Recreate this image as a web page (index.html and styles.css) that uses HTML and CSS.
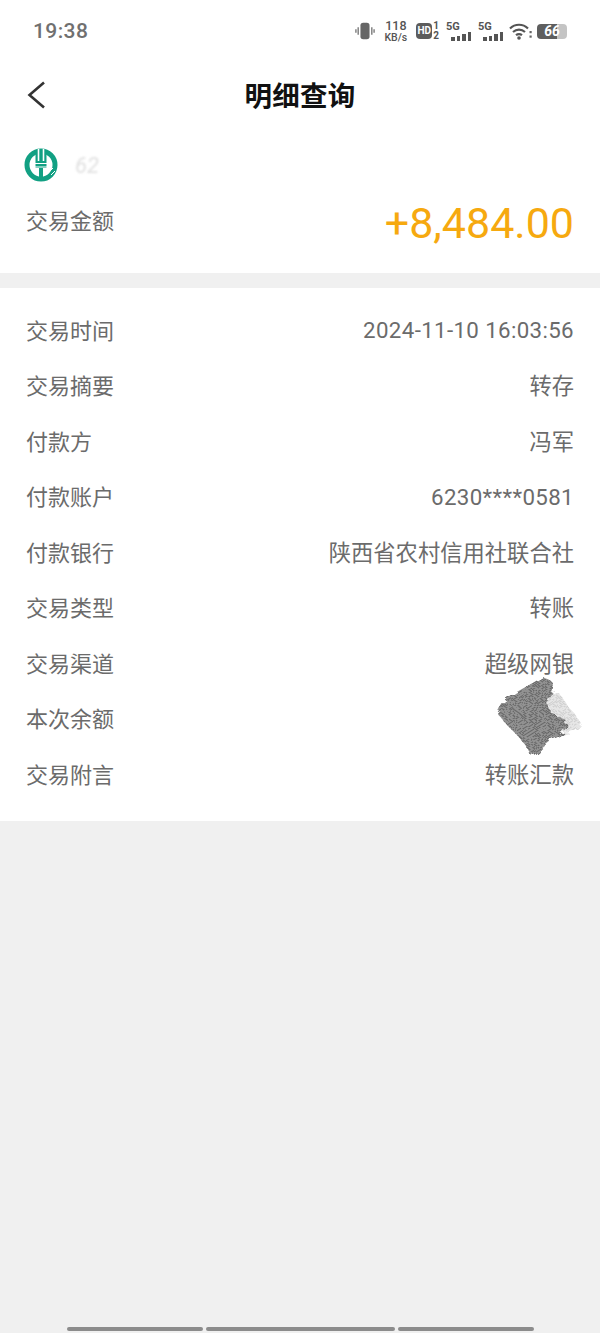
FILE: index.html
```html
<!DOCTYPE html>
<html lang="zh-CN">
<head>
  <meta charset="UTF-8">
  <title>明细查询</title>
  <link rel="stylesheet" href="styles.css">
</head>
<body>

  <div class="top">
    <div class="status">
      <span class="clock">19:38</span>
      <div class="status-icons">
        <svg width="20" height="20" viewBox="0 0 22 20" class="ico">
          <rect x="6" y="1" width="10" height="18" rx="3" fill="#666"/>
          <path d="M3.5 6v8M1 8v4M18.5 6v8M21 8v4" stroke="#777" stroke-width="1.5" fill="none"/>
        </svg>
        <div class="speed"><span>118</span><span class="unit">KB/s</span></div>
        <div class="hd"><b>HD</b><div class="sims"><span>1</span><span>2</span></div></div>
        <div class="net">
          <span>5G</span>
          <div class="bars"><i class="b1"></i><i class="b2"></i><i class="b3"></i><i class="b4"></i></div>
        </div>
        <div class="net">
          <span>5G</span>
          <div class="bars"><i class="b1"></i><i class="b2"></i><i class="b3"></i><i class="b4"></i></div>
        </div>
        <svg width="23" height="18" viewBox="0 0 23 18" class="ico">
          <path d="M1 6.5C6 1.5 14 1.5 19 6.5M4 10C7.5 6.8 12.5 6.8 16 10M7 13.2C8.8 11.8 11.2 11.8 13 13.2" stroke="#555" stroke-width="2.2" fill="none"/>
          <circle cx="10" cy="16" r="1.8" fill="#555"/>
          <rect x="20.5" y="9" width="2.2" height="2.2" fill="#666"/>
          <rect x="20.5" y="13.5" width="2.2" height="2.2" fill="#666"/>
        </svg>
        <div class="battery"><span>66</span></div>
      </div>
    </div>

    <div class="nav">
      <svg class="back" width="20" height="30" viewBox="0 0 20 30">
        <path d="M18 2.5L3.5 15L18 27.5" stroke="#333" stroke-width="2.6" fill="none"/>
      </svg>
      <h1>明细查询</h1>
    </div>

    <div class="account">
      <svg width="34" height="34" viewBox="0 0 34 34">
        <circle cx="17" cy="17" r="14" fill="none" stroke="#12a083" stroke-width="5"/>
        <rect x="11.5" y="2" width="11" height="18" fill="#12a083"/>
        <path d="M14.5 1v12M19.5 1v12" stroke="#fff" stroke-width="1.6"/>
        <path d="M9 15.5h16M9 19h16" stroke="#fff" stroke-width="1.1"/>
        <rect x="15" y="20" width="4" height="12" fill="#12a083"/>
        <path d="M24 25l5-5M27 27l4-4" stroke="#fff" stroke-width="1"/>
      </svg>
      <span class="card-no">62</span>
    </div>

    <div class="amount-row">
      <span class="label">交易金额</span>
      <span class="amount">+8,484.00</span>
    </div>
  </div>

  <div class="details">
    <div class="row"><span class="label">交易时间</span><span class="value num">2024-11-10 16:03:56</span></div>
    <div class="row"><span class="label">交易摘要</span><span class="value">转存</span></div>
    <div class="row"><span class="label">付款方</span><span class="value">冯军</span></div>
    <div class="row"><span class="label">付款账户</span><span class="value num">6230****0581</span></div>
    <div class="row"><span class="label">付款银行</span><span class="value">陕西省农村信用社联合社</span></div>
    <div class="row"><span class="label">交易类型</span><span class="value">转账</span></div>
    <div class="row"><span class="label">交易渠道</span><span class="value">超级网银</span></div>
    <div class="row"><span class="label">本次余额</span><span class="value"></span></div>
    <div class="row"><span class="label">交易附言</span><span class="value">转账汇款</span></div>

    <!-- pen scribble over the balance -->
    <svg class="scribble" width="90" height="84" viewBox="0 0 90 84">
      <defs>
        <pattern id="hatch" width="7" height="3" patternUnits="userSpaceOnUse" patternTransform="rotate(-32)">
          <rect width="7" height="1" fill="#666"/>
        </pattern>
        <pattern id="hatch-light" width="7" height="3" patternUnits="userSpaceOnUse" patternTransform="rotate(-32)">
          <rect width="7" height="1.2" fill="#cfcfcf"/>
        </pattern>
        <filter id="rough" x="-10%" y="-10%" width="120%" height="120%">
          <feTurbulence type="fractalNoise" baseFrequency="0.1 0.24" numOctaves="1" seed="4"/>
          <feDisplacementMap in="SourceGraphic" scale="10"/>
          <feGaussianBlur stdDeviation="0.5"/>
        </filter>
      </defs>
      <g filter="url(#rough)">
        <polygon points="52,18 62,16 74,32 86,48 78,56 62,60 54,48 50,30" fill="#e8e8e8"/>
        <polygon points="52,18 62,16 74,32 86,48 78,56 62,60 54,48 50,30" fill="url(#hatch-light)"/>
        <polygon points="48,2 58,8 56,18 52,28 56,38 70,44 72,52 66,60 56,66 46,74 37,82 32,72 22,60 12,50 2,38 8,28 20,18 34,10" fill="#929292"/>
        <polygon points="48,2 58,8 56,18 52,28 56,38 70,44 72,52 66,60 56,66 46,74 37,82 32,72 22,60 12,50 2,38 8,28 20,18 34,10" fill="url(#hatch)"/>
      </g>
    </svg>
  </div>

  <div class="rest">
    <div class="bottom-bar">
      <i class="seg-a"></i><i class="seg-b"></i><i class="seg-c"></i>
    </div>
  </div>

</body>
</html>
```

FILE: styles.css
```css
* {
  box-sizing: border-box;
}
html, body {
  height: 100%;
}
body {
  margin: 0;
  display: flex;
  flex-direction: column;
  background: #f0f0f0;
  font-family: Roboto, "Noto Sans CJK SC", sans-serif;
}
.top {
  background: #fff;
  height: 273px;
  margin-bottom: 15px;
}

/* status bar */
.status {
  height: 62px;
  display: flex;
  justify-content: space-between;
  align-items: center;
  padding: 0 33px 0 33px;
}
.clock {
  font-size: 21px;
  font-weight: 500;
  color: #707070;
  letter-spacing: 0.4px;
}
.status-icons {
  display: flex;
  align-items: center;
  gap: 6px;
  color: #555;
}
.ico {
  display: block;
}
.speed {
  display: flex;
  flex-direction: column;
  align-items: center;
  margin: 0 3px;
  font-size: 12.5px;
  line-height: 12px;
  font-weight: 500;
}
.speed .unit {
  font-size: 10.5px;
  line-height: 11px;
}
.hd {
  display: flex;
  align-items: center;
  gap: 1px;
  margin-right: 1px;
}
.hd b {
  background: #5c5c5c;
  color: #fff;
  font-size: 10px;
  line-height: 16px;
  width: 16px;
  text-align: center;
  border-radius: 4px;
}
.sims {
  display: flex;
  flex-direction: column;
  font-size: 10px;
  line-height: 10px;
  font-weight: 700;
}
.net {
  width: 25px;
  font-size: 11px;
  line-height: 11px;
  font-weight: 700;
}
.net + .net {
  margin-left: 1px;
}
.net span {
  display: block;
}
.bars {
  display: flex;
  align-items: flex-end;
  justify-content: flex-end;
  gap: 2px;
  height: 9px;
}
.bars i {
  width: 3.5px;
  background: #555;
}
.bars .b1 { height: 4px; }
.bars .b2 { height: 5px; }
.bars .b3 { height: 7px; }
.bars .b4 { height: 9px; }
.battery {
  width: 30px;
  height: 15px;
  margin-left: -1px;
  border-radius: 4px;
  background: linear-gradient(90deg, #5e5e5e 66%, #c4c4c4 66%);
  color: #fff;
  font-size: 14px;
  font-weight: 700;
  line-height: 15px;
  text-align: center;
  font-style: italic;
}

/* title bar */
.nav {
  position: relative;
  height: 66px;
  display: flex;
  align-items: center;
  justify-content: center;
}
.nav h1 {
  margin: 0 0 2px;
  font-size: 27.5px;
  font-weight: 700;
  color: #111;
  letter-spacing: 0.3px;
}
.back {
  position: absolute;
  left: 26px;
  top: 18px;
}

.account {
  height: 60px;
  margin-top: 7px;
  padding-left: 24px;
  display: flex;
  align-items: center;
  gap: 17px;
}
.card-no {
  font-size: 22px;
  font-style: italic;
  color: #ccc;
  opacity: 0.6;
  filter: blur(0.8px);
}
.amount-row {
  display: flex;
  justify-content: space-between;
  align-items: center;
  padding: 0 26px;
  height: 55px;
}
.amount-row .label {
  margin-bottom: 8px;
}
.amount {
  font-size: 43px;
  color: #f6a90f;
}
.label {
  font-size: 22px;
  color: #6b6b6b;
}

/* detail list */
.details {
  position: relative;
  background: #fff;
  padding: 13px 26px 20px;
}
.row {
  height: 55.5px;
  display: flex;
  justify-content: space-between;
  align-items: center;
}
.value {
  font-size: 22.3px;
  color: #6b6b6b;
}
.value.num {
  padding-top: 3px;
  letter-spacing: 0.36px;
}
.scribble {
  position: absolute;
  right: 15px;
  top: 387px;
}

.rest {
  flex: 1;
  display: flex;
  flex-direction: column;
  justify-content: flex-end;
}
.bottom-bar {
  display: flex;
  justify-content: center;
  gap: 3px;
  padding-bottom: 2px;
}
.bottom-bar i {
  height: 4px;
  background: #8c8c8c;
  border-radius: 2px;
}
.seg-a { width: 136px; }
.seg-b { width: 189px; }
.seg-c { width: 136px; }
```
